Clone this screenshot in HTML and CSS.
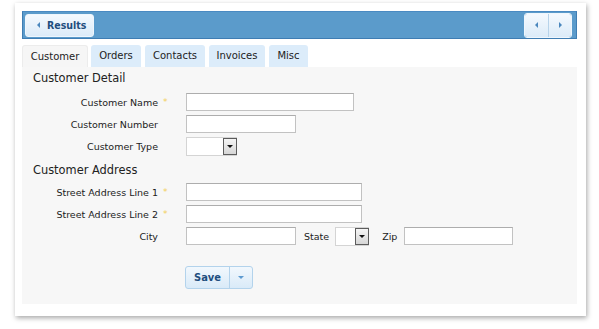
FILE: index.html
```html
<!DOCTYPE html>
<html>
<head>
<meta charset="utf-8">
<link rel="stylesheet" href="styles.css">
</head>
<body>
<div class="card">
  <div class="toolbar">
    <button class="tb-btn results"><span class="tri-left"></span>Results</button>
    <div class="nav-group">
      <button class="nav-btn"><span class="tri-left small"></span></button>
      <button class="nav-btn"><span class="tri-right small"></span></button>
    </div>
  </div>
  <div class="tabs">
    <div class="tab active t-customer">Customer</div>
    <div class="tab t-orders">Orders</div>
    <div class="tab t-contacts">Contacts</div>
    <div class="tab t-invoices">Invoices</div>
    <div class="tab t-misc">Misc</div>
  </div>
  <div class="panel">
    <div class="section-title">Customer Detail</div>
    <div class="row">
      <label class="lbl">Customer Name</label><span class="req">*</span>
      <span class="input w168"></span>
    </div>
    <div class="row">
      <label class="lbl">Customer Number</label><span class="req"></span>
      <span class="input w110"></span>
    </div>
    <div class="row">
      <label class="lbl">Customer Type</label><span class="req"></span>
      <span class="select w51"><span class="sel-btn"><span class="tri-down"></span></span></span>
    </div>
    <div class="section-title second">Customer Address</div>
    <div class="row">
      <label class="lbl">Street Address Line 1</label><span class="req">*</span>
      <span class="input w176"></span>
    </div>
    <div class="row">
      <label class="lbl">Street Address Line 2</label><span class="req">*</span>
      <span class="input w176"></span>
    </div>
    <div class="row">
      <label class="lbl">City</label><span class="req"></span>
      <span class="input w110"></span>
      <label class="inline-lbl state-lbl">State</label>
      <span class="select w34"><span class="sel-btn"><span class="tri-down"></span></span></span>
      <label class="inline-lbl zip-lbl">Zip</label>
      <span class="input w109"></span>
    </div>
    <div class="actions">
      <div class="split">
        <button class="split-main">Save</button>
        <button class="split-arrow"><span class="tri-down blue"></span></button>
      </div>
    </div>
  </div>
</div>
</body>
</html>
```

FILE: styles.css
```css
* { box-sizing: border-box; }
html, body { margin: 0; padding: 0; background: #ffffff; }
body {
  font-family: "DejaVu Sans", Verdana, sans-serif;
  font-size: 9.5px;
  color: #222;
  width: 599px;
  height: 329px;
  overflow: hidden;
}
button { font-family: inherit; margin: 0; padding: 0; cursor: default; }

.card {
  margin: 3px 0 0 15px;
  width: 571px;
  height: 313px;
  background: #fff;
  box-shadow: 1px 2px 5px rgba(0,0,0,0.35);
  padding: 8px 9px 0 7px;
}

.toolbar {
  height: 28px;
  background: #5b9bcb;
  border: 1px solid #3f7db3;
  border-top-color: #4a8ac2;
  display: flex;
  align-items: center;
  justify-content: space-between;
  padding: 0 4px 0 2px;
}
.tb-btn, .nav-btn {
  height: 23px;
  background: linear-gradient(#f4f9fe, #dcebf8);
  border: 1px solid #eef6fd;
  border-radius: 3px;
  color: #1f4e7e;
  font-family: "DejaVu Sans Condensed", "DejaVu Sans", sans-serif;
  font-weight: bold;
  font-size: 10.5px;
  display: flex;
  align-items: center;
}
.results { width: 69px; padding-left: 11px; gap: 7px; }
.nav-group { display: flex; border-radius: 3px; overflow: hidden; border: 1px solid #eef6fd; }
.nav-btn { width: 23px; border: none; border-radius: 0; justify-content: center; }
.nav-btn + .nav-btn { border-left: 1px solid #b7d3ea; }

.tri-left { width: 0; height: 0; border-top: 3px solid transparent; border-bottom: 3px solid transparent; border-right: 3px solid #4b87bd; }
.tri-right { width: 0; height: 0; border-top: 3px solid transparent; border-bottom: 3px solid transparent; border-left: 3px solid #4b87bd; }
.tri-down { width: 0; height: 0; border-left: 3px solid transparent; border-right: 3px solid transparent; border-top: 3px solid #111; }
.tri-down.blue { border-top-color: #5d9ad0; }

.tabs {
  margin-top: 6px;
  height: 22px;
  display: flex;
}
.tab {
  height: 22px;
  background: #dcecfa;
  border-radius: 3px 3px 0 0;
  font-size: 10px;
  line-height: 22px;
  color: #222;
  text-align: center;
  margin-right: 4px;
}
.t-customer { width: 66px; margin-right: 3px; }
.t-orders { width: 50px; }
.t-contacts { width: 60px; }
.t-invoices { width: 56px; }
.t-misc { width: 39px; }
.tab.active { background: #f6f6f6; border: 1px solid #ececec; border-bottom: none; line-height: 21px; }

.panel {
  height: 237px;
  background: #f7f7f7;
  padding-top: 1px;
  padding-left: 11px;
}
.section-title {
  height: 20px;
  line-height: 20px;
  font-size: 11.4px;
  color: #222;
  margin-bottom: 3px;
}
.section-title.second { margin-top: 3px; margin-bottom: 1px; }

.row {
  height: 22px;
  display: flex;
  align-items: center;
}
.lbl {
  width: 125px;
  text-align: right;
  color: #222;
}
.req {
  width: 28px;
  padding-left: 5px;
  color: #f2cf5a;
  font-size: 9px;
  align-self: flex-start;
  padding-top: 6px;
}
.input {
  height: 18px;
  background: #fff;
  border: 1px solid #c2c2c2;
  border-top-color: #adadad;
  display: block;
}
.w168 { width: 168px; }
.w110 { width: 110px; }
.w176 { width: 176px; }
.w109 { width: 109px; }
.select {
  height: 19px;
  background: #fff;
  border: 1px solid #d4d4d4;
  border-right: none;
  display: flex;
  justify-content: flex-end;
}
.w51 { width: 51px; }
.w34 { width: 34px; }
.sel-btn {
  width: 14px;
  height: 17px;
  border: 1px solid #5c5c5c;
  background: linear-gradient(#f5f5f5, #d6d6d6);
  display: flex;
  align-items: center;
  justify-content: center;
}
.inline-lbl { color: #222; }
.state-lbl { margin-left: 8px; margin-right: 6px; }
.zip-lbl { margin-left: 13px; margin-right: 7px; }

.actions {
  padding-left: 152px;
  margin-top: 19px;
}
.split {
  display: flex;
  width: 68px;
  height: 23px;
  border: 1px solid #b3d3ec;
  border-radius: 3px;
  overflow: hidden;
  background: linear-gradient(#f2f8fd, #d9eaf8);
}
.split-main {
  width: 43px;
  border: none;
  background: transparent;
  color: #1f4e7e;
  font-family: "DejaVu Sans Condensed", "DejaVu Sans", sans-serif;
  font-size: 11px;
  font-weight: bold;
}
.split-arrow {
  flex: 1;
  border: none;
  border-left: 1px solid #b3d3ec;
  background: transparent;
  display: flex;
  align-items: center;
  justify-content: center;
}
```
